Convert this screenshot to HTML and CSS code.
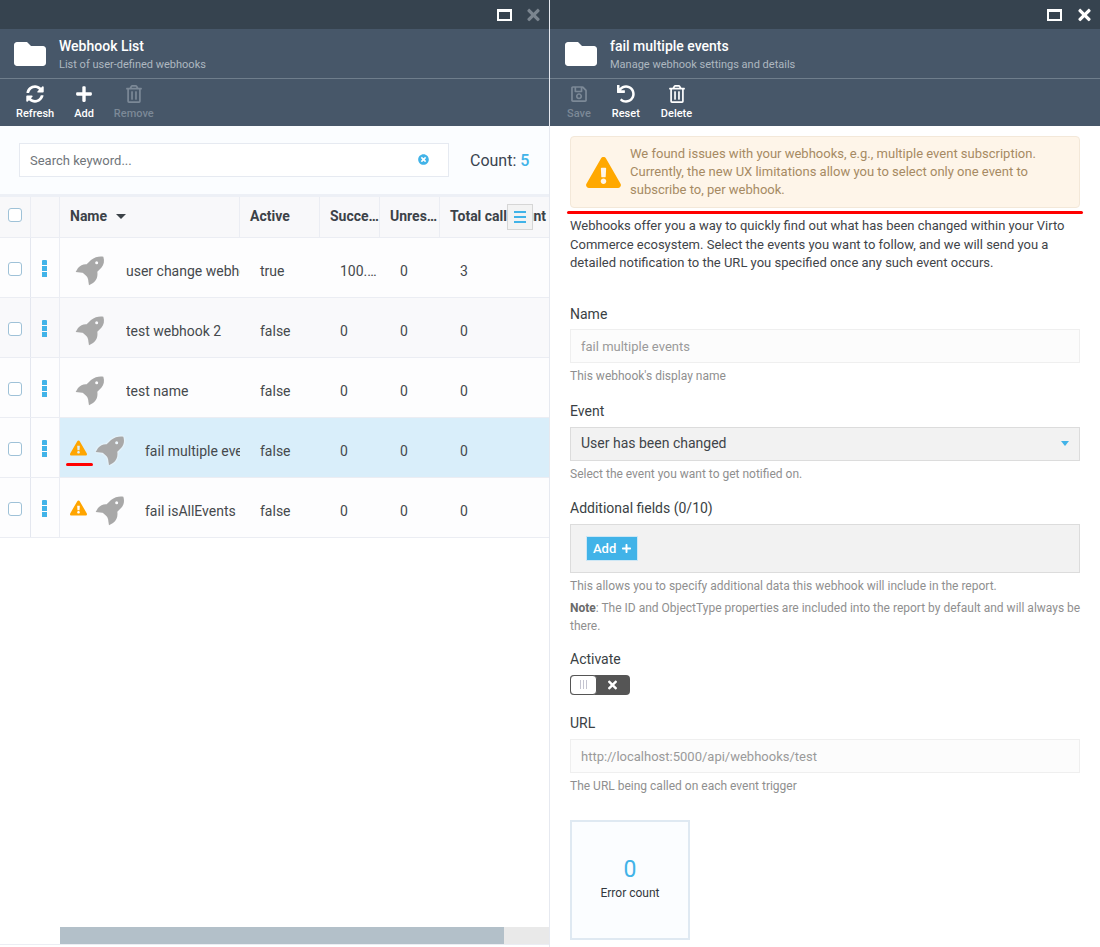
FILE: index.html
```html
<!DOCTYPE html>
<html lang="en">
<head>
    <meta charset="UTF-8">
    <meta name="viewport" content="width=device-width, initial-scale=1.0">
    <title>Webhooks</title>
    <link rel="stylesheet" href="styles.css">
</head>
<body>

<svg class="icon-defs" aria-hidden="true">
    <symbol id="i-folder" viewBox="0 0 512 512"><path d="M464 128H272l-64-64H48C21.49 64 0 85.49 0 112v288c0 26.51 21.49 48 48 48h416c26.51 0 48-21.49 48-48V176c0-26.51-21.49-48-48-48z"/></symbol>
    <symbol id="i-sync" viewBox="0 0 512 512"><path d="M370.72 133.28C339.458 104.008 298.888 87.962 255.848 88c-77.458.068-144.328 53.178-162.791 126.85-1.344 5.363-6.122 9.15-11.651 9.15H24.103c-7.498 0-13.194-6.807-11.807-14.176C33.933 94.924 134.813 8 256 8c66.448 0 126.791 26.136 171.315 68.685L463.03 40.97C478.149 25.851 504 36.559 504 57.941V192c0 13.255-10.745 24-24 24H345.941c-21.382 0-32.09-25.851-16.971-40.971l41.75-41.749zM32 296h134.059c21.382 0 32.09 25.851 16.971 40.971l-41.75 41.75c31.262 29.273 71.835 45.319 114.876 45.28 77.418-.07 144.315-53.144 162.787-126.849 1.344-5.363 6.122-9.15 11.651-9.15h57.304c7.498 0 13.194 6.807 11.807 14.176C478.067 417.076 377.187 504 256 504c-66.448 0-126.791-26.136-171.315-68.685L48.97 471.03C33.851 486.149 8 475.441 8 454.059V320c0-13.255 10.745-24 24-24z"/></symbol>
    <symbol id="i-plus" viewBox="0 0 448 512"><path d="M416 208H272V64c0-17.67-14.33-32-32-32h-32c-17.67 0-32 14.33-32 32v144H32c-17.67 0-32 14.33-32 32v32c0 17.67 14.33 32 32 32h144v144c0 17.67 14.33 32 32 32h32c17.67 0 32-14.33 32-32V304h144c17.67 0 32-14.33 32-32v-32c0-17.67-14.33-32-32-32z"/></symbol>
    <symbol id="i-trash" viewBox="0 0 448 512"><path d="M268 416h24a12 12 0 0 0 12-12V188a12 12 0 0 0-12-12h-24a12 12 0 0 0-12 12v216a12 12 0 0 0 12 12zM432 80h-82.41l-34-56.7A48 48 0 0 0 274.41 0H173.59a48 48 0 0 0-41.16 23.3L98.41 80H16A16 16 0 0 0 0 96v16a16 16 0 0 0 16 16h16v336a48 48 0 0 0 48 48h288a48 48 0 0 0 48-48V128h16a16 16 0 0 0 16-16V96a16 16 0 0 0-16-16zM171.84 50.91A6 6 0 0 1 177 48h94a6 6 0 0 1 5.15 2.91L293.61 80H154.39zM368 464H80V128h288zm-212-48h24a12 12 0 0 0 12-12V188a12 12 0 0 0-12-12h-24a12 12 0 0 0-12 12v216a12 12 0 0 0 12 12z"/></symbol>
    <symbol id="i-save" viewBox="0 0 448 512"><path d="M433.941 129.941l-83.882-83.882A48 48 0 0 0 316.118 32H48C21.49 32 0 53.49 0 80v352c0 26.51 21.49 48 48 48h352c26.51 0 48-21.49 48-48V163.882a48 48 0 0 0-14.059-33.941zM272 80v80H144V80h128zm122 352H54a6 6 0 0 1-6-6V86a6 6 0 0 1 6-6h42v104c0 13.255 10.745 24 24 24h176c13.255 0 24-10.745 24-24V83.882l78.243 78.243a6 6 0 0 1 1.757 4.243V426a6 6 0 0 1-6 6zM224 232c-48.523 0-88 39.477-88 88s39.477 88 88 88 88-39.477 88-88-39.477-88-88-88zm0 128c-22.056 0-40-17.944-40-40s17.944-40 40-40 40 17.944 40 40-17.944 40-40 40z"/></symbol>
    <symbol id="i-undo" viewBox="0 0 512 512"><path d="M212.333 224.333H12c-6.627 0-12-5.373-12-12V12C0 5.373 5.373 0 12 0h48c6.627 0 12 5.373 12 12v78.112C117.773 39.279 184.26 7.47 258.175 8.007c136.906.994 246.448 111.623 246.157 248.532C504.041 393.258 393.12 504 256.333 504c-64.089 0-122.496-24.313-166.51-64.215-5.099-4.622-5.334-12.554-.467-17.42l33.967-33.967c4.474-4.474 11.662-4.717 16.401-.525C170.76 415.336 211.58 432 256.333 432c97.268 0 176-78.716 176-176 0-97.267-78.716-176-176-176-58.496 0-110.28 28.476-142.274 72.333h98.274c6.627 0 12 5.373 12 12v48c0 6.627-5.373 12-12 12z"/></symbol>
    <symbol id="i-times" viewBox="0 0 352 512"><path d="M242.72 256l100.07-100.07c12.28-12.28 12.28-32.19 0-44.48l-22.24-22.24c-12.28-12.28-32.19-12.28-44.48 0L176 189.28 75.93 89.21c-12.28-12.28-32.19-12.28-44.48 0L9.21 111.45c-12.28 12.28-12.28 32.19 0 44.48L109.28 256 9.21 356.07c-12.28 12.28-12.28 32.19 0 44.48l22.24 22.24c12.28 12.28 32.2 12.28 44.48 0L176 322.72l100.07 100.07c12.28 12.28 32.2 12.28 44.48 0l22.24-22.24c12.28-12.28 12.28-32.19 0-44.48L242.72 256z"/></symbol>
    <symbol id="i-times-circle" viewBox="0 0 512 512"><path d="M256 8C119 8 8 119 8 256s111 248 248 248 248-111 248-248S393 8 256 8zm121.6 313.1c4.7 4.7 4.7 12.3 0 17L338 377.6c-4.7 4.7-12.3 4.7-17 0L256 312l-65.1 65.6c-4.7 4.7-12.3 4.7-17 0L134.4 338c-4.7-4.7-4.7-12.3 0-17l65.6-65-65.6-65.1c-4.7-4.7-4.7-12.3 0-17l39.6-39.6c4.7-4.7 12.3-4.7 17 0l65 65.7 65.1-65.6c4.7-4.7 12.3-4.7 17 0l39.6 39.6c4.7 4.7 4.7 12.3 0 17L312 256l65.6 65.1z"/></symbol>
    <symbol id="i-warning" viewBox="0 0 576 512"><path d="M569.517 440.013C587.975 472.007 564.806 512 527.94 512H48.054c-36.937 0-59.999-40.055-41.577-71.987L246.423 23.985c18.467-32.009 64.72-31.951 83.154 0l239.94 416.028zM288 354c-25.405 0-46 20.595-46 46s20.595 46 46 46 46-20.595 46-46-20.595-46-46-46zm-43.673-165.346l7.418 136c.347 6.364 5.609 11.346 11.982 11.346h48.546c6.373 0 11.635-4.982 11.982-11.346l7.418-136c.375-6.874-5.098-12.654-11.982-12.654h-63.383c-6.884 0-12.356 5.78-11.981 12.654z"/></symbol>
    <symbol id="i-rocket" viewBox="16 12 90 90"><path fill-rule="evenodd" d="M101 14C90 12 76 14 64 24L51 37C41 36 32 40 25 48L18 60L38 62C41 63 44 66 46 68L50 72C54 76 56 82 56 88L58 100L70 93C81 85 85 73 83 59L95 47C103 38 105 26 101 14ZM81 28A4.5 4.5 0 1 1 81 37A4.5 4.5 0 1 1 81 28Z"/></symbol>
</svg>

<div class="workspace">

    <!-- Webhook list blade -->
    <section class="blade blade-list">
        <div class="blade-top">
            <span class="win-maximize"></span>
            <svg class="win-close win-close-off"><use href="#i-times"/></svg>
        </div>
        <header class="blade-head">
            <svg class="blade-folder"><use href="#i-folder"/></svg>
            <div>
                <div class="blade-title">Webhook List</div>
                <div class="blade-sub">List of user-defined webhooks</div>
            </div>
        </header>
        <nav class="toolbar toolbar-list">
            <div class="tool"><svg class="tool-icon"><use href="#i-sync"/></svg><span>Refresh</span></div>
            <div class="tool"><svg class="tool-icon"><use href="#i-plus"/></svg><span>Add</span></div>
            <div class="tool tool-off"><svg class="tool-icon"><use href="#i-trash"/></svg><span>Remove</span></div>
        </nav>

        <div class="list-body">
            <div class="search-row">
                <div class="search-box">
                    <span>Search keyword...</span>
                    <svg class="search-clear"><use href="#i-times-circle"/></svg>
                </div>
                <div class="count">Count: <b>5</b></div>
            </div>

            <div class="grid">
                <div class="grid-row grid-head">
                    <div class="cell cell-check"><span class="check"></span></div>
                    <div class="cell cell-menu"></div>
                    <div class="cell cell-name">Name <i class="sort-caret"></i></div>
                    <div class="cell cell-active">Active</div>
                    <div class="cell cell-num"><span class="clip">Success rate</span></div>
                    <div class="cell cell-num"><span class="clip">Unresolved</span></div>
                    <div class="cell cell-total">Total call count</div>
                    <button class="grid-menu"><span></span><span></span><span></span></button>
                </div>

                <div class="grid-row">
                    <div class="cell cell-check"><span class="check"></span></div>
                    <div class="cell cell-menu"><i class="dots"></i></div>
                    <div class="cell cell-name">
                        <svg class="rocket"><use href="#i-rocket"/></svg>
                        <span class="clip name-text">user change webhook</span>
                    </div>
                    <div class="cell cell-active">true</div>
                    <div class="cell cell-num"><span class="clip">100.00%</span></div>
                    <div class="cell cell-num">0</div>
                    <div class="cell cell-total">3</div>
                </div>

                <div class="grid-row grid-row-alt">
                    <div class="cell cell-check"><span class="check"></span></div>
                    <div class="cell cell-menu"><i class="dots"></i></div>
                    <div class="cell cell-name">
                        <svg class="rocket"><use href="#i-rocket"/></svg>
                        <span class="clip name-text">test webhook 2</span>
                    </div>
                    <div class="cell cell-active">false</div>
                    <div class="cell cell-num">0</div>
                    <div class="cell cell-num">0</div>
                    <div class="cell cell-total">0</div>
                </div>

                <div class="grid-row">
                    <div class="cell cell-check"><span class="check"></span></div>
                    <div class="cell cell-menu"><i class="dots"></i></div>
                    <div class="cell cell-name">
                        <svg class="rocket"><use href="#i-rocket"/></svg>
                        <span class="clip name-text">test name</span>
                    </div>
                    <div class="cell cell-active">false</div>
                    <div class="cell cell-num">0</div>
                    <div class="cell cell-num">0</div>
                    <div class="cell cell-total">0</div>
                </div>

                <div class="grid-row grid-row-selected">
                    <div class="cell cell-check"><span class="check"></span></div>
                    <div class="cell cell-menu"><i class="dots"></i></div>
                    <div class="cell cell-name cell-warned">
                        <svg class="warn-small"><use href="#i-warning"/></svg>
                        <svg class="rocket rocket-warned"><use href="#i-rocket"/></svg>
                        <span class="clip name-text">fail multiple events</span>
                        <i class="red-mark red-mark-row"></i>
                    </div>
                    <div class="cell cell-active">false</div>
                    <div class="cell cell-num">0</div>
                    <div class="cell cell-num">0</div>
                    <div class="cell cell-total">0</div>
                </div>

                <div class="grid-row">
                    <div class="cell cell-check"><span class="check"></span></div>
                    <div class="cell cell-menu"><i class="dots"></i></div>
                    <div class="cell cell-name cell-warned">
                        <svg class="warn-small"><use href="#i-warning"/></svg>
                        <svg class="rocket rocket-warned"><use href="#i-rocket"/></svg>
                        <span class="clip name-text">fail isAllEvents</span>
                    </div>
                    <div class="cell cell-active">false</div>
                    <div class="cell cell-num">0</div>
                    <div class="cell cell-num">0</div>
                    <div class="cell cell-total">0</div>
                </div>
            </div>

            <div class="h-scroll"><div class="h-scroll-thumb"></div></div>
        </div>
    </section>

    <!-- Webhook details blade -->
    <section class="blade blade-detail">
        <div class="blade-top">
            <span class="win-maximize"></span>
            <svg class="win-close"><use href="#i-times"/></svg>
        </div>
        <header class="blade-head">
            <svg class="blade-folder"><use href="#i-folder"/></svg>
            <div>
                <div class="blade-title">fail multiple events</div>
                <div class="blade-sub">Manage webhook settings and details</div>
            </div>
        </header>
        <nav class="toolbar toolbar-detail">
            <div class="tool tool-off"><svg class="tool-icon"><use href="#i-save"/></svg><span>Save</span></div>
            <div class="tool"><svg class="tool-icon"><use href="#i-undo"/></svg><span>Reset</span></div>
            <div class="tool"><svg class="tool-icon"><use href="#i-trash"/></svg><span>Delete</span></div>
        </nav>

        <div class="detail-body">
            <div class="alert">
                <svg class="alert-icon"><use href="#i-warning"/></svg>
                <p>We found issues with your webhooks, e.g., multiple event subscription. Currently, the new UX limitations allow you to select only one event to subscribe to, per webhook.</p>
                <i class="red-mark red-mark-alert"></i>
            </div>

            <p class="intro">Webhooks offer you a way to quickly find out what has been changed within your Virto Commerce ecosystem. Select the events you want to follow, and we will send you a detailed notification to the URL you specified once any such event occurs.</p>

            <div class="field field-name">
                <label>Name</label>
                <div class="input">fail multiple events</div>
                <div class="hint">This webhook's display name</div>
            </div>

            <div class="field">
                <label>Event</label>
                <div class="select">User has been changed<i class="select-caret"></i></div>
                <div class="hint">Select the event you want to get notified on.</div>
            </div>

            <div class="field field-additional">
                <label>Additional fields (0/10)</label>
                <div class="add-box">
                    <button class="add-btn">Add <svg class="add-plus"><use href="#i-plus"/></svg></button>
                </div>
                <div class="hint hint-long">This allows you to specify additional data this webhook will include in the report.</div>
                <div class="hint hint-long hint-note"><b>Note</b>: The ID and ObjectType properties are included into the report by default and will always be there.</div>
            </div>

            <div class="field field-toggle">
                <label>Activate</label>
                <div class="toggle">
                    <span class="toggle-knob"><i></i><i></i><i></i></span>
                    <svg class="toggle-x"><use href="#i-times"/></svg>
                </div>
            </div>

            <div class="field">
                <label>URL</label>
                <div class="input">http://localhost:5000/api/webhooks/test</div>
                <div class="hint">The URL being called on each event trigger</div>
            </div>

            <div class="tile">
                <div class="tile-num">0</div>
                <div class="tile-label">Error count</div>
            </div>
        </div>
    </section>

</div>

</body>
</html>
```

FILE: styles.css
```css
/* Page */
html, body {
    margin: 0;
    height: 100%;
    overflow: hidden;
}

body {
    font-family: Roboto, "Liberation Sans", sans-serif;
    font-size: 13px;
    color: #333;
    background: #fff;
}

.icon-defs {
    position: absolute;
    width: 0;
    height: 0;
}

.workspace {
    display: flex;
    height: 947px;
}

/* Blades */
.blade {
    display: flex;
    flex-direction: column;
    height: 100%;
    overflow: hidden;
}

.blade-list {
    width: 549px;
    border-right: 1px solid #e6e9f0;
}

.blade-detail {
    width: 550px;
}

.blade-top {
    display: flex;
    justify-content: flex-end;
    align-items: center;
    gap: 15px;
    height: 29px;
    padding-right: 9px;
    background: #36434f;
}

.blade-detail .blade-top {
    gap: 16px;
}

.win-maximize {
    box-sizing: border-box;
    width: 15px;
    height: 12px;
    border: 2px solid #fff;
    border-top-width: 3px;
}

.win-close {
    width: 13px;
    height: 18px;
    fill: #fff;
}

.win-close-off {
    fill: #7b858f;
}

.blade-head {
    display: flex;
    align-items: center;
    gap: 13px;
    box-sizing: border-box;
    height: 50px;
    padding: 2px 14px 0;
    background: #475769;
    border-bottom: 1px solid #6f7e8c;
}

.blade-detail .blade-head {
    padding-left: 15px;
}

.blade-folder {
    width: 32px;
    height: 32px;
    margin-top: -2px;
    fill: #fff;
}

.blade-title {
    font-size: 14px;
    font-weight: 500;
    line-height: 17px;
    color: #fff;
}

.blade-sub {
    margin-top: 3px;
    font-size: 11px;
    line-height: 14px;
    color: #aeb7c0;
}

/* Toolbar */
.toolbar {
    display: flex;
    height: 47px;
    background: #475769;
}

.toolbar-list {
    gap: 20px;
    padding-left: 16px;
}

.toolbar-detail {
    gap: 21px;
    padding-left: 17px;
}

.tool {
    display: flex;
    flex-direction: column;
    align-items: center;
    padding-top: 6px;
    font-size: 11px;
    font-weight: 500;
    line-height: 14px;
    color: #fff;
}

.tool-icon {
    width: 18px;
    height: 18px;
    margin-bottom: 4px;
    fill: #fff;
}

.tool-off {
    color: #7c8997;
}

.tool-off .tool-icon {
    fill: #7c8997;
}

/* Search */
.list-body {
    position: relative;
    flex: 1;
}

.search-row {
    display: flex;
    align-items: center;
    box-sizing: border-box;
    height: 71px;
    padding: 0 19px;
    background: #fbfdff;
    border-bottom: 3px solid #edf0f6;
}

.search-box {
    display: flex;
    justify-content: space-between;
    align-items: center;
    box-sizing: border-box;
    width: 430px;
    height: 34px;
    padding: 0 19px 0 10px;
    background: #fff;
    border: 1px solid #e6eaf1;
    color: #70757a;
}

.search-clear {
    width: 11px;
    height: 11px;
    margin-bottom: 2px;
    fill: #41b3e8;
}

.count {
    margin-left: 21px;
    font-size: 16px;
    color: #3a4450;
}

.count b {
    font-weight: 500;
    color: #41b3e8;
}

/* Grid */
.grid-row {
    position: relative;
    display: flex;
    height: 60px;
    background: #fdfdfe;
    border-bottom: 1px solid #ebedf3;
    box-sizing: border-box;
}

.grid-row-alt {
    background: #f9f9fb;
}

.grid-head {
    height: 41px;
    background: #f8f8fa;
    font-weight: 700;
    color: #3c4248;
}

.cell {
    display: flex;
    align-items: center;
    box-sizing: border-box;
    min-width: 0;
    padding-left: 10px;
    white-space: nowrap;
}

.grid-head .cell {
    padding-bottom: 2px;
    border-right: 1px solid #ebedf3;
}

.cell-check {
    justify-content: center;
    width: 31px;
    padding: 0;
    border-right: 1px solid #e4e7ef;
}

.cell-menu {
    justify-content: center;
    width: 29px;
    padding: 0;
    border-right: 1px solid #ebedf3;
}

.cell-name {
    width: 180px;
    padding-left: 15px;
}

.grid-head .cell-name {
    padding-left: 10px;
}

.cell-warned {
    position: relative;
    padding-left: 10px;
}

.cell-active {
    width: 80px;
    padding: 6px 0 0 20px;
}

.grid-head .cell-active {
    padding: 0 0 2px 10px;
}

.cell-num {
    width: 60px;
    padding: 6px 0 0 20px;
}

.grid-head .cell-num {
    padding: 0 0 2px 10px;
}

.cell-total {
    flex: 1;
    padding: 6px 0 0 20px;
}

.grid-head .cell-total {
    padding: 0 0 2px 10px;
    border-right: 0;
}

.grid-row-selected .cell-name,
.grid-row-selected .cell-active,
.grid-row-selected .cell-num,
.grid-row-selected .cell-total {
    background: #d9eefa;
}

.clip {
    display: block;
    min-width: 0;
    overflow: hidden;
    text-overflow: ellipsis;
}

.name-text {
    flex: 1;
    padding-top: 6px;
    overflow: hidden;
    text-overflow: clip;
    font-size: 14px;
    color: #45494d;
}

.cell-active,
.cell-num,
.cell-total {
    font-size: 14px;
    color: #45494d;
}

.grid-head .cell-name,
.grid-head .cell-active,
.grid-head .cell-num,
.grid-head .cell-total {
    font-size: 14px;
    font-weight: 700;
    color: #3c4248;
}

.check {
    box-sizing: border-box;
    width: 14px;
    height: 14px;
    margin-top: 2px;
    background: #fff;
    border: 1px solid #9fc2d8;
    border-radius: 3px;
}

.grid-head .check {
    margin-top: -2px;
}

.dots {
    width: 5px;
    height: 18px;
    margin: 2px 1px 0 0;
    background: linear-gradient(#41b3e8 5px, transparent 5px) 0 0 / 5px 6px repeat-y;
    border-radius: 1px;
}

.sort-caret {
    width: 0;
    height: 0;
    margin-left: 9px;
    border: 5px solid transparent;
    border-top: 5px solid #3c4248;
    border-bottom: 0;
}

.grid-menu {
    position: absolute;
    top: 7px;
    right: 16px;
    display: flex;
    flex-direction: column;
    justify-content: center;
    gap: 3px;
    box-sizing: border-box;
    width: 26px;
    height: 26px;
    padding: 0 6px;
    background: #f3f3f3;
    border: 1px solid #d6d6d6;
}

.grid-menu span {
    height: 2px;
    background: #41b3e8;
}

.rocket {
    flex: none;
    width: 30px;
    height: 30px;
    margin: 6px 21px 0 0;
    fill: #a8a8a8;
}

.rocket-warned {
    margin-right: 20px;
}

.grid-row-selected .rocket {
    filter: drop-shadow(0 0 1px #fff);
}

.warn-small {
    flex: none;
    width: 17px;
    height: 16px;
    margin: 1px 8px 0 0;
    fill: #ffa500;
}

/* Red annotation lines drawn over the screenshot */
.red-mark {
    position: absolute;
    height: 3px;
    background: #f00;
    border-radius: 2px;
}

.red-mark-row {
    left: 6px;
    top: 45px;
    width: 27px;
}

.red-mark-alert {
    left: -4px;
    right: -4px;
    bottom: -7px;
}

/* Scroll bar */
.h-scroll {
    position: absolute;
    left: 60px;
    right: 0;
    bottom: 3px;
    height: 17px;
    background: #e9e9e9;
}

.h-scroll-thumb {
    width: 444px;
    height: 100%;
    background: #b3c0c9;
}

.list-body::after {
    content: "";
    position: absolute;
    left: 0;
    right: 0;
    bottom: 2px;
    height: 1px;
    background: #ebedf3;
}

/* Detail form */
.detail-body {
    flex: 1;
    padding: 10px 20px 0;
}

.alert {
    position: relative;
    display: flex;
    align-items: center;
    gap: 9px;
    box-sizing: border-box;
    height: 72px;
    padding: 0 14px 0 15px;
    background: #fef5e9;
    border: 1px solid #f3e8d9;
    border-radius: 4px;
    color: #a68a63;
    line-height: 18px;
}

.alert p {
    margin: 0;
}

.alert-icon {
    flex: none;
    width: 35px;
    height: 31px;
    fill: #ffa800;
}

.intro {
    margin: 9px 0 0;
    line-height: 1.42857;
    color: #3f4449;
}

.field {
    margin-top: 20px;
}

.field-name {
    margin-top: 33px;
}

.field-additional {
    margin-top: 19px;
}

.field label {
    display: block;
    font-size: 14px;
    line-height: 16px;
    margin-bottom: 8px;
    color: #3a3f44;
}

.field-name label {
    margin-bottom: 7px;
}

.input {
    box-sizing: border-box;
    height: 34px;
    padding: 0 10px;
    line-height: 33px;
    background: #fcfcfc;
    border: 1px solid #efefef;
    color: #9a9a9a;
}

.select {
    position: relative;
    box-sizing: border-box;
    height: 34px;
    padding: 0 10px;
    font-size: 14px;
    line-height: 31px;
    background: #f2f2f2;
    border: 1px solid #dcdcdc;
    color: #3f4449;
}

.select-caret {
    position: absolute;
    top: 13px;
    right: 10px;
    width: 0;
    height: 0;
    border: 4px solid transparent;
    border-top: 5px solid #41b3e8;
    border-bottom: 0;
}

.hint {
    margin-top: 6px;
    font-size: 12px;
    line-height: 14px;
    color: #8f8f8f;
}

.hint-long {
    margin-right: -20px;
}

.hint-note {
    margin-top: 6px;
    line-height: 18px;
}

.hint-note b {
    font-weight: 700;
    color: #6a6a6a;
}

.add-box {
    display: flex;
    align-items: center;
    box-sizing: border-box;
    height: 49px;
    padding: 0 15px;
    background: #f2f2f2;
    border: 1px solid #dcdcdc;
}

.add-btn {
    display: flex;
    align-items: center;
    gap: 6px;
    box-sizing: border-box;
    height: 25px;
    padding: 0 6px;
    font: 500 13px Roboto, sans-serif;
    color: #fff;
    background: #41b3e8;
    border: 1px solid #cde7f5;
}

.add-plus {
    width: 9px;
    height: 11px;
    fill: #fff;
}

.toggle {
    display: flex;
    width: 60px;
    height: 20px;
    background: #555;
    border-radius: 4px;
}

.field-toggle {
    margin-top: 16px;
}

.toggle-knob {
    display: flex;
    align-items: center;
    justify-content: center;
    gap: 2px;
    box-sizing: border-box;
    width: 27px;
    background: #fff;
    border: 1px solid #555;
    border-radius: 4px;
}

.toggle-knob i {
    width: 1px;
    height: 9px;
    background: #c4c4d0;
}

.toggle-x {
    width: 9px;
    height: 20px;
    margin-left: 11px;
    fill: #fff;
}

/* Error count tile */
.tile {
    box-sizing: border-box;
    width: 120px;
    height: 120px;
    margin-top: 27px;
    padding-top: 35px;
    text-align: center;
    background: #fbfdff;
    border: 2px solid #dfe9f2;
}

.tile-num {
    font-size: 23px;
    line-height: 26px;
    color: #41b3e8;
}

.tile-label {
    margin-top: 2px;
    font-size: 12px;
    line-height: 16px;
    color: #33383d;
}
```
